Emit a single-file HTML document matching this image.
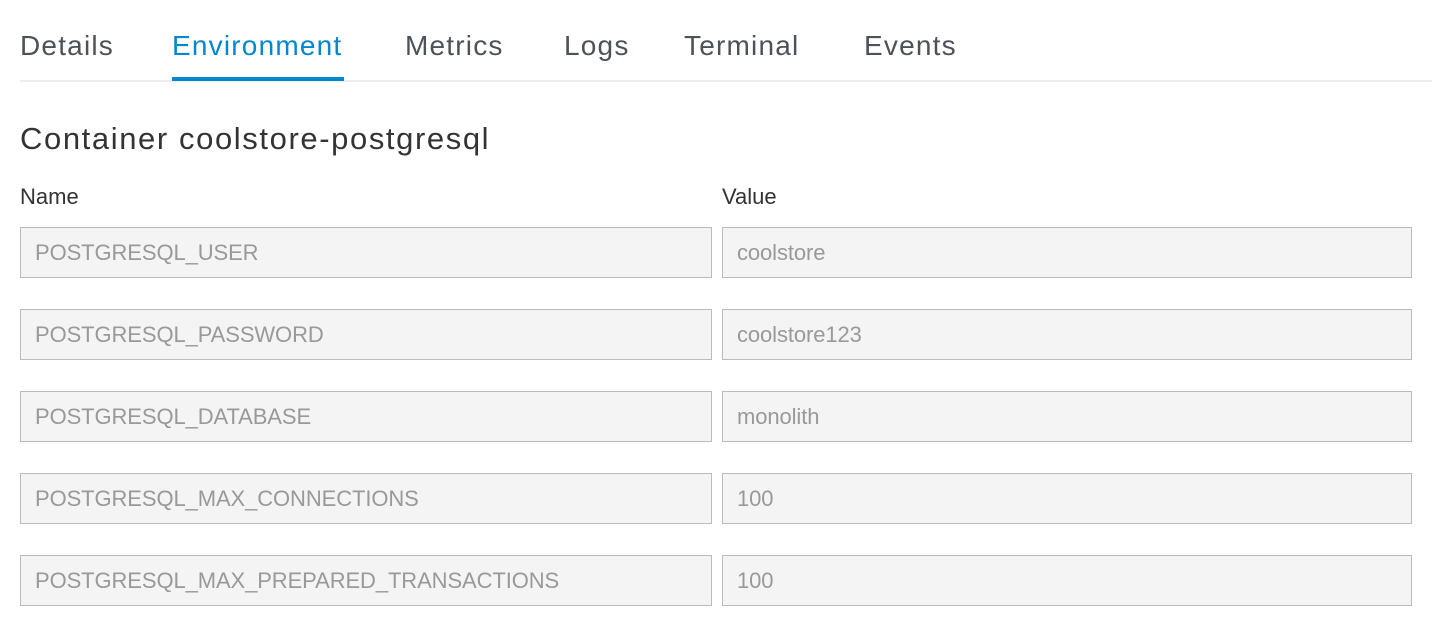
<!DOCTYPE html>
<html><head><style>
body{margin:0;background:#fff;font-family:"Liberation Sans",sans-serif;width:1446px;height:636px;overflow:hidden;position:relative}
.tabs{position:absolute;left:20px;top:0;width:1412px;height:80px;border-bottom:2px solid #ededed}
.tab{position:absolute;top:30px;font-size:28px;color:#4d5258;letter-spacing:1.2px}
.tab.a{color:#0088ce}
.ul{position:absolute;left:172px;top:77px;width:172px;height:4px;background:#0088ce}
h2{position:absolute;left:20px;top:121px;margin:0;font-weight:normal;font-size:31px;color:#333;letter-spacing:1.6px}
.lbl{position:absolute;top:184px;font-size:22px;color:#333}
.in{position:absolute;border:1px solid #bbb;background:#f4f4f4;box-sizing:border-box;height:51px;font-size:22px;color:#999;line-height:49px;padding-left:14px;letter-spacing:-0.1px}
</style></head><body>
<div class="tabs"></div>
<div class="tab" style="left:20px">Details</div>
<div class="tab a" style="left:172px">Environment</div>
<div class="tab" style="left:405px">Metrics</div>
<div class="tab" style="left:564px">Logs</div>
<div class="tab" style="left:684px">Terminal</div>
<div class="tab" style="left:864px">Events</div>
<div class="ul"></div>
<h2>Container coolstore-postgresql</h2>
<div class="lbl" style="left:20px">Name</div>
<div class="lbl" style="left:722px">Value</div>
<div class="in" style="left:20px;top:227px;width:692px">POSTGRESQL_USER</div>
<div class="in" style="left:722px;top:227px;width:690px">coolstore</div>
<div class="in" style="left:20px;top:309px;width:692px">POSTGRESQL_PASSWORD</div>
<div class="in" style="left:722px;top:309px;width:690px">coolstore123</div>
<div class="in" style="left:20px;top:391px;width:692px">POSTGRESQL_DATABASE</div>
<div class="in" style="left:722px;top:391px;width:690px">monolith</div>
<div class="in" style="left:20px;top:473px;width:692px">POSTGRESQL_MAX_CONNECTIONS</div>
<div class="in" style="left:722px;top:473px;width:690px">100</div>
<div class="in" style="left:20px;top:555px;width:692px">POSTGRESQL_MAX_PREPARED_TRANSACTIONS</div>
<div class="in" style="left:722px;top:555px;width:690px">100</div>
</body></html>
